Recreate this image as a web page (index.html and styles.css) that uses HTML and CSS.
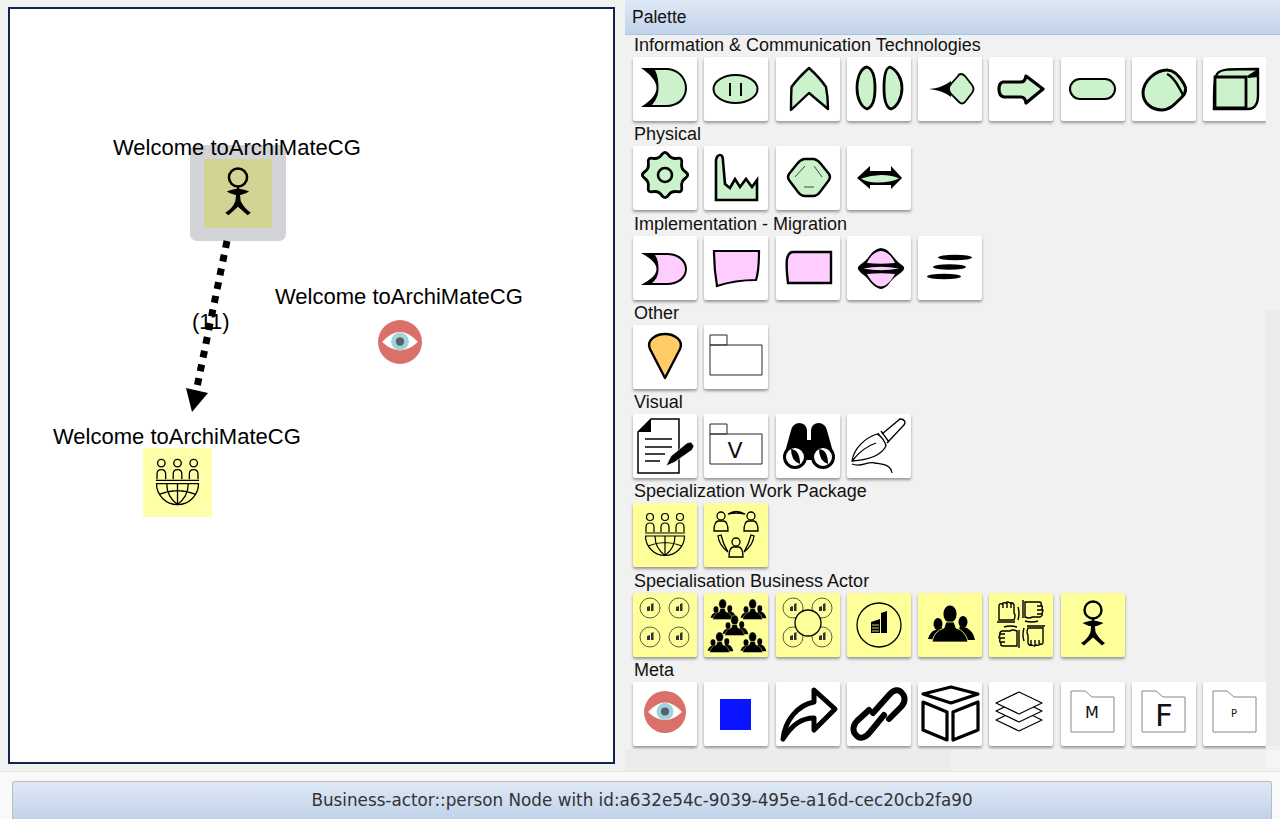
FILE: index.html
```html
<!DOCTYPE html>
<html lang="en">
<head>
<meta charset="utf-8">
<title>ArchiMateCG</title>
<link rel="stylesheet" href="styles.css">
</head>
<body>
<svg class="defs" aria-hidden="true">
  <defs>
    <g id="crowd">
      <ellipse cx="20" cy="31" rx="4.500" ry="6"/><path d="M10 46Q12 39 17 37L24 34L26 47Z"/>
      <ellipse cx="45" cy="29" rx="4.500" ry="6"/><path d="M57 47Q55 38 49 35L42 33L38 47Z"/>
      <ellipse cx="32" cy="21" rx="7" ry="9" stroke="#ffff99" stroke-width=".8"/>
      <path d="M14 49Q16 38 26 35L28 29H36L38 35Q48 38 50 49Z" stroke="#ffff99" stroke-width=".8"/>
    </g>
    <g id="fist" fill="none">
      <path d="M10 27V13Q10 10 13 11Q14 9 17 10Q18 8 21 10Q24 9 25 12V20Q27 22 25 27Z"/>
      <path d="M8 29H26M29 14Q31 20 29 27M14 11V15M18 10V15M22 10V15"/>
    </g>
    <g id="mini-bld">
      <path d="M-3 3V-1L0 -2V3ZM1 3V-4L3.500 -5V3Z" fill="#333"/>
    </g>
    <symbol id="i-service" viewBox="0 0 64 64">
      <path d="M8 11H33C46 11 54 21 54 31C54 42 46 50 33 50H8C17 44 23.500 38 23.500 31C23.500 24 17 17 8 11Z" fill="#000"/>
      <path d="M22 13H33C44 13 52 21 52 31C52 41 44 48 33 48H19C24 42 25.500 37 25.500 31C25.500 25 25 19 22 13Z" fill="#ccf2cc"/>
    </symbol>
    <symbol id="i-ellipse" viewBox="0 0 64 64">
      <ellipse cx="31.500" cy="32" rx="22" ry="14" fill="#ccf2cc" stroke="#000" stroke-width="2"/>
      <path d="M26 26V39M37 26V39" stroke="#000" stroke-width="2" fill="none"/>
    </symbol>
    <symbol id="i-chevron" viewBox="0 0 64 64">
      <path d="M33 11Q44 21 50 30Q52 40 52 52L33 36L15 53Q15 40 15.500 30Q22 21 33 11Z" fill="#ccf2cc" stroke="#000" stroke-width="2.400" stroke-linejoin="round"/>
    </symbol>
    <symbol id="i-lens" viewBox="0 0 64 64">
      <path d="M20 10C26 12 28 22 28 31C28 41 26 50 20 52C14 50 10 41 10 31C10 20 14 11 20 10Z" fill="#ccf2cc" stroke="#000" stroke-width="2.800"/>
      <path d="M43 10C50 13 55 22 55 31C55 41 50 50 44 52C38 50 37 41 37 31C37 22 38 11 43 10Z" fill="#ccf2cc" stroke="#000" stroke-width="2.800"/>
    </symbol>
    <symbol id="i-tail" viewBox="0 0 64 64">
      <path d="M11 32Q24 31 33 24L33 40Q24 33 11 32Z" fill="#000"/>
      <path d="M43 17Q45 17 47 19L54 28Q57 32 54 36L47 45Q44 48 41 45L33 37Q29 32 33 27L40 19Q41 17 43 17Z" fill="#ccf2cc" stroke="#000" stroke-width="1.800"/>
    </symbol>
    <symbol id="i-arrow" viewBox="0 0 64 64">
      <path d="M14 25H32Q36 25 37 19L54 32L37 46Q36 40 32 40H15Q10 39 10 32Q10 26 14 25Z" fill="#ccf2cc" stroke="#000" stroke-width="3.200" stroke-linejoin="round"/>
    </symbol>
    <symbol id="i-pill" viewBox="0 0 64 64">
      <rect x="9" y="22" width="45" height="20" rx="10" fill="#ccf2cc" stroke="#000" stroke-width="2"/>
    </symbol>
    <symbol id="i-blob" viewBox="0 0 64 64">
      <path d="M35 13C42 13 47 18 52 27C55 32 54 36 50 40C44 46 38 53 30 53C20 53 11 46 11 36C11 24 24 13 35 13Z" fill="#ccf2cc" stroke="#000" stroke-width="3"/>
      <path d="M35 17C42 20 47 30 51 38" fill="none" stroke="#000" stroke-width="2.400"/>
    </symbol>
    <symbol id="i-cube" viewBox="0 0 64 64">
      <path d="M11 52C11 35 11 22 14 17C17 12 24 12 55 12V38C55 46 52 52 45 52Z" fill="#ccf2cc" stroke="#000" stroke-width="2.400"/>
      <path d="M12 20H43V51H12Z" fill="#ccf2cc" stroke="#000" stroke-width="2.800"/>
      <path d="M44 19L55 12V20L45 21Z" fill="#000"/>
    </symbol>
    <symbol id="i-gear" viewBox="0 0 64 64">
      <path d="M28.750 8.650Q32 4 35.250 8.650Q38.500 13.300 44.100 12.300Q49.700 11.300 48.700 16.900Q47.700 22.500 52.350 25.750Q57 29 52.350 32.250Q47.700 35.500 48.700 41.100Q49.700 46.700 44.100 45.700Q38.500 44.700 35.250 49.350Q32 54 28.750 49.350Q25.500 44.700 19.900 45.700Q14.300 46.700 15.300 41.100Q16.300 35.500 11.650 32.250Q7 29 11.650 25.750Q16.300 22.500 15.300 16.900Q14.300 11.300 19.900 12.300Q25.500 13.300 28.750 8.650Z" fill="#ccf2cc" stroke="#000" stroke-width="2.800"/>
      <circle cx="32" cy="29" r="7" fill="#ccf2cc" stroke="#000" stroke-width="2.600"/>
    </symbol>
    <symbol id="i-factory" viewBox="0 0 64 64">
      <path d="M12 54V14Q13 9 16 9Q19 9 19 15L21 38L26 42L31 33L36 41L42 33L48 41L53 34V54Z" fill="#ccf2cc" stroke="#000" stroke-width="2.600"/>
    </symbol>
    <symbol id="i-device" viewBox="0 0 64 64">
      <path d="M28 13H38Q42 14 45 18L53 28Q55 31 53 34L44 46Q41 50 37 50H29Q25 50 22 46L13 34Q11 31 13 28L21 18Q24 14 28 13Z" fill="#ccf2cc" stroke="#000" stroke-width="2.400"/>
      <path d="M19 31L29 20M38 20L46 31M28 41H38" fill="none" stroke="#333" stroke-width=".9"/>
    </symbol>
    <symbol id="i-dbl" viewBox="0 0 64 64">
      <path d="M10 32L23 20V25H44V20L55 32L44 43V39H23V43Z" fill="#000"/>
      <path d="M14 32.500Q24 29 34 29Q46 29 52 32.500Q44 36.500 30 36.500Q20 36.500 14 32.500Z" fill="#ccf2cc"/>
    </symbol>
    <symbol id="i-service-p" viewBox="0 0 64 64">
      <path d="M8 17H34C46 17 54 24 54 33C54 42 46 49 34 49H8C17 44 23.500 39 23.500 33C23.500 27 17 22 8 17Z" fill="#000"/>
      <path d="M22 19H34C44 19 52 25 52 33C52 41 44 47 34 47H19C24 43 25.500 38 25.500 33C25.500 28 25 23 22 19Z" fill="#ffccff"/>
    </symbol>
    <symbol id="i-wp" viewBox="0 0 64 64">
      <path d="M10 15H55C55 30 54 38 52 44C40 44 25 46 13 50C11 38 10 26 10 15Z" fill="#ffccff" stroke="#000" stroke-width="2.200"/>
    </symbol>
    <symbol id="i-del" viewBox="0 0 64 64">
      <path d="M17 16H55V47H12C11 38 10 30 11 23C12 18 14 16 17 16Z" fill="#ffccff" stroke="#000" stroke-width="2.400"/>
    </symbol>
    <symbol id="i-gap" viewBox="0 0 64 64">
      <path d="M34 12C42 13 45 20 50 25C54 29 58 30 57 33C56 36 50 39 46 43C42 47 40 52 34 53C28 52 24 47 20 42C16 38 12 36 11 33C10 30 15 28 19 24C23 20 26 13 34 12Z" fill="#000"/>
      <path d="M20 27C24 18 30 15 34 15C38 15 44 18 48 27Q34 28.500 20 27ZM20 38C24 46 30 50.500 34 50.500C38 50.500 44 46 48 38Q34 36.500 20 38ZM16 32.500Q34 29 52 32.500Q34 36 16 32.500Z" fill="#ffccff"/>
    </symbol>
    <symbol id="i-lines" viewBox="0 0 64 64">
      <ellipse cx="37" cy="21.500" rx="17" ry="2.800"/><ellipse cx="31.500" cy="31" rx="16.500" ry="2.800"/><ellipse cx="26" cy="40.500" rx="17" ry="2.800"/>
    </symbol>
    <symbol id="i-pin" viewBox="0 0 64 64">
      <path d="M32 53L17 24C13 15 23 9 32 9C41 9 51 15 47 24Z" fill="#ffcc66" stroke="#000" stroke-width="2.400" stroke-linejoin="round"/>
    </symbol>
    <symbol id="i-folder" viewBox="0 0 64 64">
      <path d="M6 10H23V20H6ZM6 20H58V50H6Z" fill="#fff" stroke="#322" stroke-width="1"/>
    </symbol>
    <symbol id="i-doc" viewBox="0 0 64 64">
      <path d="M18 5H46V59H5V18Z" fill="#fff" stroke="#000" stroke-width="1.500"/>
      <path d="M18 5V18H5Z" fill="#000"/>
      <path d="M12 25H39M12 33H39M12 40H32M12 47H27" stroke="#000" stroke-width="1.500" fill="none"/>
      <path d="M33 52L38 42L54 29L58 28L61 32L59 36L42 48Z" fill="#000" stroke="#fff" stroke-width=".7"/>
    </symbol>
    <symbol id="i-vfolder" viewBox="0 0 64 64">
      <path d="M6 10H23V20H6ZM6 20H58V50H6Z" fill="#fff" stroke="#322" stroke-width="1"/>
      <text x="31" y="44" class="svg-t" font-size="22" text-anchor="middle">V</text>
    </symbol>
    <symbol id="i-binoc" viewBox="0 0 64 64">
      <path d="M14 20Q16 9 23 9Q30 9 31 16V26H35V16Q36 9 43 9Q50 9 52 20L57 38L50 46H16L9 38Z" fill="#000"/>
      <circle cx="19" cy="43" r="10.500" fill="#fff" stroke="#000" stroke-width="3"/>
      <circle cx="47" cy="43" r="10.500" fill="#fff" stroke="#000" stroke-width="3"/>
      <path d="M15 35Q24 36 24 50Q15 47 15 35ZM43 35Q52 36 52 50Q43 47 43 35Z" fill="#000"/>
    </symbol>
    <symbol id="i-nib" viewBox="0 0 64 64">
      <path d="M35 20L53 5Q57 5 58 8Q58 11 55 13L40 29" fill="#fff" stroke="#000" stroke-width="1.300"/>
      <path d="M31 19L39 31M34 17L42 28" stroke="#000" stroke-width="1.300" fill="none"/>
      <path d="M5 47C7 34 18 24 30 20C34 22 38 27 39 32C34 42 20 46 5 47ZM5 47C12 38 20 32 29 29" fill="#fff" stroke="#000" stroke-width="1.300"/>
      <path d="M5 50C14 54 20 47 28 49C34 50 44 50 45 59" fill="none" stroke="#000" stroke-width="1.300"/>
    </symbol>
    <symbol id="i-globe" viewBox="0 0 64 64">
      <g fill="none" stroke="#000" stroke-width="1.200">
        <circle cx="17" cy="14" r="3.500"/><circle cx="32" cy="14" r="3.500"/><circle cx="47" cy="14" r="3.500"/>
        <path d="M13 29V24Q13 20 17 20Q21 20 21 24V29M28 29V24Q28 20 32 20Q36 20 36 24V29M43 29V24Q43 20 47 20Q51 20 51 24V29"/>
        <path d="M12 30H52M12 33H52M12.500 33A19.500 19.500 0 0 0 51.500 33"/>
        <path d="M32 33V52.500M22 33C22 42 26 48 32 52.500C38 48 42 42 42 33M15 43Q32 36 49 43"/>
      </g>
    </symbol>
    <symbol id="i-ring" viewBox="0 0 64 64">
      <g fill="none" stroke="#000" stroke-width="1.300">
        <circle cx="17" cy="13" r="4"/><circle cx="47" cy="13" r="4"/><circle cx="32" cy="39" r="4"/>
        <path d="M10 28Q10 19 14 18H20Q24 19 24 28ZM40 28Q40 19 44 18H50Q54 19 54 28ZM25 54Q25 45 29 44H35Q39 45 39 54Z"/>
        <path d="M24 11Q32 6 41 11Q32 9 24 11ZM14 33Q15 42 24 49Q19 41 17 32ZM50 33Q49 42 40 49Q45 41 47 32Z"/>
      </g>
    </symbol>
    <g id="bc">
      <circle r="10" fill="none" stroke="#333" stroke-width=".8"/>
      <use href="#mini-bld"/>
    </g>
    <symbol id="i-4c" viewBox="0 0 64 64">
      <use href="#bc" x="17" y="15"/><use href="#bc" x="46" y="15"/><use href="#bc" x="17" y="44"/><use href="#bc" x="46" y="44"/>
    </symbol>
    <symbol id="i-crowds" viewBox="0 0 64 64">
      <use href="#crowd" transform="translate(1 -.5) scale(.55)"/>
      <use href="#crowd" transform="translate(31 -.5) scale(.55)"/>
      <use href="#crowd" transform="translate(-2 32.500) scale(.55)"/>
      <use href="#crowd" transform="translate(31 32.500) scale(.55)"/>
      <use href="#crowd" transform="translate(13 15.500) scale(.55)"/>
    </symbol>
    <symbol id="i-hub" viewBox="0 0 64 64">
      <use href="#bc" x="17" y="15"/><use href="#bc" x="46" y="15"/><use href="#bc" x="17" y="44"/><use href="#bc" x="46" y="44"/>
      <circle cx="32" cy="30" r="13" fill="#ffff99" stroke="#000" stroke-width="1.300"/>
    </symbol>
    <symbol id="i-org" viewBox="0 0 64 64">
      <circle cx="32" cy="32" r="22" fill="none" stroke="#000" stroke-width="1.300"/>
      <path d="M24 40V29L33 26V40ZM34 40V20L40 18V40Z" fill="#000"/>
      <path d="M25 32H32M25 35H32M25 38H32" stroke="#ffff99" stroke-width=".8"/>
    </symbol>
    <symbol id="i-people" viewBox="0 0 64 64">
      <use href="#crowd"/>
    </symbol>
    <symbol id="i-fists" viewBox="0 0 64 64">
      <g stroke="#000" stroke-width="1.400">
        <use href="#fist"/>
        <use href="#fist" transform="rotate(90 32 31)"/>
        <use href="#fist" transform="rotate(180 32 31)"/>
        <use href="#fist" transform="rotate(270 32 31)"/>
      </g>
    </symbol>
    <symbol id="i-actor" viewBox="0 0 64 64">
      <circle cx="32" cy="17" r="8.500" fill="none" stroke="#000" stroke-width="2.400"/>
      <path d="M31 25H33L34.500 39Q38 46 44 50L41 52.500Q36 48 32 44.500Q28 48 23 52.500L20 50Q27 46 29.500 39Z" fill="#000"/>
      <path d="M21.500 30Q28 27.500 32 27.500Q36 27.500 42.500 30Q36 33.500 32 33.500Q28 33.500 21.500 30Z" fill="#000"/>
    </symbol>
    <symbol id="i-eye" viewBox="0 0 64 64">
      <circle cx="32" cy="30" r="21" fill="#d9716a"/>
      <path d="M15 30Q32 11 49 30Q32 46 15 30Z" fill="#fff"/>
      <circle cx="32" cy="29.500" r="8.500" fill="#9fd3db"/>
      <circle cx="32" cy="29.500" r="4" fill="#57606a"/>
    </symbol>
    <symbol id="i-square" viewBox="0 0 64 64">
      <rect x="16" y="17" width="31" height="31" fill="#0a14ff"/>
    </symbol>
    <symbol id="i-share" viewBox="0 0 64 64">
      <path d="M7 57C9 38 22 23 38 20V8L59 27L38 48V36C24 36 15 44 7 57Z" fill="#fff" stroke="#000" stroke-width="5" stroke-linejoin="round"/>
    </symbol>
    <symbol id="i-link" viewBox="0 0 64 64">
      <g fill="none" stroke="#000" stroke-width="6" stroke-linecap="round">
        <path d="M26 31L42 13C47 7 52 7 55 11C59 15 58 21 54 25L42 37"/>
        <path d="M37 33L23 50C18 57 12 57 9 53C5 49 6 43 10 39L22 28"/>
      </g>
    </symbol>
    <symbol id="i-box" viewBox="0 0 64 64">
      <g fill="none" stroke="#000" stroke-width="3.200" stroke-linejoin="round">
        <path d="M5 12L33 5L60 12L33 21Z"/>
        <path d="M5 20L29 30V58L5 48Z"/>
        <path d="M35 30L60 20V48L35 58Z"/>
      </g>
    </symbol>
    <symbol id="i-layers" viewBox="0 0 64 64">
      <g fill="#fff" stroke="#000" stroke-width="1.200" stroke-linejoin="round">
        <path d="M7 38L30 27L53 38L30 49Z"/>
        <path d="M7 29L30 18L53 29L30 40Z"/>
        <path d="M7 21L30 10L53 21L30 32Z"/>
      </g>
    </symbol>
    <symbol id="i-fm" viewBox="0 0 64 64">
      <path d="M10 9H24L31 15H53V50H10Z" fill="#fff" stroke="#888" stroke-width="1"/>
      <text x="31" y="36" class="svg-t" font-size="16" text-anchor="middle">M</text>
    </symbol>
    <symbol id="i-ff" viewBox="0 0 64 64">
      <path d="M10 9H24L31 15H53V50H10Z" fill="#fff" stroke="#888" stroke-width="1"/>
      <text x="32" y="44" class="svg-t" font-size="31" text-anchor="middle">F</text>
    </symbol>
    <symbol id="i-fp" viewBox="0 0 64 64">
      <path d="M10 9H24L31 15H53V50H10Z" fill="#fff" stroke="#888" stroke-width="1"/>
      <text x="31" y="35" class="svg-t" font-size="10" text-anchor="middle">P</text>
    </symbol>
  </defs>
</svg>

<div class="main">
  <div class="left">
    <div class="canvas">
      <div class="frame"><div class="actor-tile"><svg class="fill"><use href="#i-actor"/></svg></div></div>
      <svg class="edge" viewBox="0 0 70 180">
        <path class="edge-line" d="M37 1L6 152"/>
        <path d="M-4 148L18 153L2 172Z"/>
      </svg>
      <div class="edge-label">(11)</div>
      <div class="node-label l-a">Welcome toArchiMateCG</div>
      <div class="node-label l-b">Welcome toArchiMateCG</div>
      <svg class="eye-node"><use href="#i-eye" x="-11.500" y="-9.400" width="67" height="67"/></svg>
      <div class="node-label l-c">Welcome toArchiMateCG</div>
      <div class="globe-tile"><svg class="fill"><use href="#i-globe"/></svg></div>
    </div>
  </div>
  <div class="right">
    <div class="header">Palette</div>
    <div class="palette">
      <section class="section">
        <div class="label">Information &amp; Communication Technologies</div>
        <div class="row">
          <div class="tile"><svg><use href="#i-service"/></svg></div>
          <div class="tile"><svg><use href="#i-ellipse"/></svg></div>
          <div class="tile"><svg><use href="#i-chevron"/></svg></div>
          <div class="tile"><svg><use href="#i-lens"/></svg></div>
          <div class="tile"><svg><use href="#i-tail"/></svg></div>
          <div class="tile"><svg><use href="#i-arrow"/></svg></div>
          <div class="tile"><svg><use href="#i-pill"/></svg></div>
          <div class="tile"><svg><use href="#i-blob"/></svg></div>
          <div class="tile"><svg><use href="#i-cube"/></svg></div>
        </div>
      </section>
      <section class="section">
        <div class="label">Physical</div>
        <div class="row">
          <div class="tile"><svg><use href="#i-gear"/></svg></div>
          <div class="tile"><svg><use href="#i-factory"/></svg></div>
          <div class="tile"><svg><use href="#i-device"/></svg></div>
          <div class="tile"><svg><use href="#i-dbl"/></svg></div>
        </div>
      </section>
      <section class="section">
        <div class="label">Implementation - Migration</div>
        <div class="row">
          <div class="tile"><svg><use href="#i-service-p"/></svg></div>
          <div class="tile"><svg><use href="#i-wp"/></svg></div>
          <div class="tile"><svg><use href="#i-del"/></svg></div>
          <div class="tile"><svg><use href="#i-gap"/></svg></div>
          <div class="tile"><svg><use href="#i-lines"/></svg></div>
        </div>
      </section>
      <section class="section">
        <div class="label">Other</div>
        <div class="row">
          <div class="tile"><svg><use href="#i-pin"/></svg></div>
          <div class="tile"><svg><use href="#i-folder"/></svg></div>
        </div>
      </section>
      <section class="section">
        <div class="label">Visual</div>
        <div class="row">
          <div class="tile"><svg><use href="#i-doc"/></svg></div>
          <div class="tile"><svg><use href="#i-vfolder"/></svg></div>
          <div class="tile"><svg><use href="#i-binoc"/></svg></div>
          <div class="tile"><svg><use href="#i-nib"/></svg></div>
        </div>
      </section>
      <section class="section">
        <div class="label">Specialization Work Package</div>
        <div class="row">
          <div class="tile yellow"><svg><use href="#i-globe"/></svg></div>
          <div class="tile yellow"><svg><use href="#i-ring"/></svg></div>
        </div>
      </section>
      <section class="section">
        <div class="label">Specialisation Business Actor</div>
        <div class="row">
          <div class="tile yellow"><svg><use href="#i-4c"/></svg></div>
          <div class="tile yellow"><svg><use href="#i-crowds"/></svg></div>
          <div class="tile yellow"><svg><use href="#i-hub"/></svg></div>
          <div class="tile yellow"><svg><use href="#i-org"/></svg></div>
          <div class="tile yellow"><svg><use href="#i-people"/></svg></div>
          <div class="tile yellow"><svg><use href="#i-fists"/></svg></div>
          <div class="tile yellow"><svg><use href="#i-actor"/></svg></div>
        </div>
      </section>
      <section class="section">
        <div class="label">Meta</div>
        <div class="row">
          <div class="tile"><svg><use href="#i-eye"/></svg></div>
          <div class="tile"><svg><use href="#i-square"/></svg></div>
          <div class="tile"><svg><use href="#i-share"/></svg></div>
          <div class="tile"><svg><use href="#i-link"/></svg></div>
          <div class="tile"><svg><use href="#i-box"/></svg></div>
          <div class="tile"><svg><use href="#i-layers"/></svg></div>
          <div class="tile"><svg><use href="#i-fm"/></svg></div>
          <div class="tile"><svg><use href="#i-ff"/></svg></div>
          <div class="tile"><svg><use href="#i-fp"/></svg></div>
        </div>
      </section>
    </div>
    <div class="hbar"><div class="hthumb"></div><div class="corner"></div></div>
    <div class="vbar"></div>
  </div>
</div>
<div class="footer">
  <div class="status">Business-actor::person Node with id:a632e54c-9039-495e-a16d-cec20cb2fa90</div>
</div>
</body>
</html>
```
FILE: styles.css
```css
html, body {
  margin: 0;
  height: 100%;
  overflow: hidden;
}
body {
  display: flex;
  flex-direction: column;
  height: 819px;
  background: #f9f9f9;
  font-family: "Liberation Sans", Arial, sans-serif;
  color: #000;
}
.defs {
  position: absolute;
  width: 0;
  height: 0;
}
.svg-t {
  font-family: "DejaVu Sans", sans-serif;
  fill: #111;
}
.main {
  display: flex;
  height: 771px;
  background: #f1f1f1;
  border-bottom: 1px solid #e4e4e4;
  flex: none;
}
.left {
  width: 625px;
  flex: none;
  padding: 7px 10px 7px 8px;
  box-sizing: border-box;
  display: flex;
}
.canvas {
  position: relative;
  flex: 1;
  background: #fff;
  border: 2px solid #12234f;
  overflow: hidden;
}
.node-label {
  position: absolute;
  font-size: 22px;
  line-height: 24px;
  white-space: nowrap;
}
.l-a { left: 103px; top: 127px; }
.l-b { left: 265px; top: 276px; }
.l-c { left: 43px; top: 416px; }
.frame {
  position: absolute;
  left: 180px;
  top: 136px;
  width: 96px;
  height: 96px;
  box-sizing: border-box;
  padding: 14px;
  background: #d2d4d8;
  border-radius: 7px;
}
.actor-tile {
  width: 68px;
  height: 69px;
  background: #d3d393;
}
.globe-tile {
  position: absolute;
  left: 133px;
  top: 439px;
  width: 69px;
  height: 69px;
  background: #ffffa8;
}
.fill {
  display: block;
  width: 100%;
  height: 100%;
}
.edge {
  position: absolute;
  left: 180px;
  top: 231px;
  width: 70px;
  height: 180px;
  overflow: visible;
}
.edge-line {
  fill: none;
  stroke: #000;
  stroke-width: 7;
  stroke-dasharray: 7 7;
}
.edge-label {
  position: absolute;
  left: 182px;
  top: 301px;
  font-size: 22px;
  line-height: 24px;
}
.eye-node {
  position: absolute;
  left: 368px;
  top: 311px;
  width: 44px;
  height: 44px;
}
.right {
  position: relative;
  flex: 1;
  display: flex;
  flex-direction: column;
  min-width: 0;
}
.header {
  flex: none;
  height: 34px;
  line-height: 35px;
  padding-left: 7px;
  font-size: 17.500px;
  color: #111;
  background: linear-gradient(#dfe9f5, #c0d2ea);
  border-bottom: 1px solid #a9c4e6;
}
.palette {
  flex: 1;
  margin-right: 14px;
  overflow: hidden;
  min-height: 0;
}
.section {
  padding-top: 3.250px;
}
.section:first-child {
  padding-top: 0;
}
.label {
  margin-left: 9px;
  font-size: 18px;
  line-height: 21.750px;
  margin-bottom: .250px;
  white-space: nowrap;
  color: #111;
}
.row {
  display: flex;
  gap: 7.250px;
  padding-left: 8px;
}
.tile {
  flex: none;
  width: 64px;
  height: 64px;
  background: #fff;
  border-radius: 2px;
  box-shadow: 0 2px 3px rgba(0, 0, 0, .38);
}
.tile.yellow {
  background: #ffff99;
}
.tile svg {
  display: block;
  width: 64px;
  height: 64px;
}
.hbar {
  flex: none;
  display: flex;
  height: 21px;
  background: #f0f0f0;
}
.hthumb {
  width: 325px;
  background: #ebebeb;
}
.corner {
  width: 14px;
  height: 18px;
  margin-left: auto;
  background: #f6f6f6;
}
.vbar {
  position: absolute;
  right: 0;
  top: 310px;
  width: 14px;
  height: 436px;
  background: #ebebeb;
}
.footer {
  flex: 1;
  padding: 9px 8px 0 12px;
  min-height: 0;
}
.status {
  height: 38px;
  box-sizing: border-box;
  border: 1px solid #bbb;
  border-bottom: 0;
  border-radius: 3px 3px 0 0;
  background: linear-gradient(#dfe9f5, #c0d2ea);
  font-family: "DejaVu Sans", Verdana, sans-serif;
  font-size: 16.800px;
  line-height: 37px;
  text-align: center;
  color: #333;
}
```
